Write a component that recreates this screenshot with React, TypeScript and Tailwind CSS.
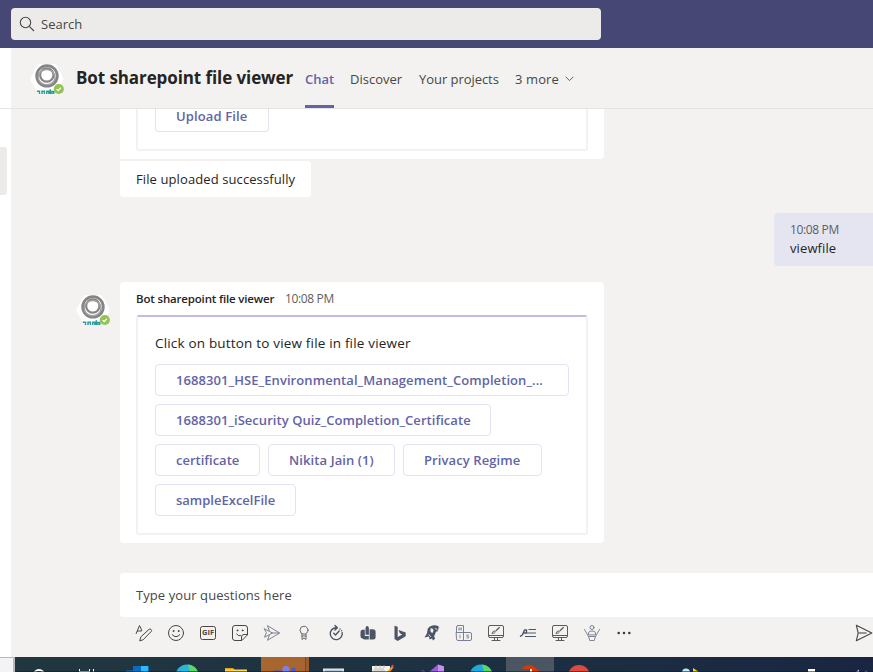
import React from "react";

const Avatar = () => (
  <svg width="36" height="34" viewBox="0 0 36 34" className="block">
    <path d="M11 1h14q2 0 3 2l6 11q1 2 0 4l-6 11q-1 2-3 2H11q-2 0-3-2L2 18q-1-2 0-4L8 3q1-2 3-2Z" fill="#fff" />
    <g fill="none" stroke="#858585">
      <circle cx="18" cy="12.900" r="10.300" strokeWidth="2.800" />
      <circle cx="17.800" cy="12" r="6.700" strokeWidth="2.200" />
      <ellipse cx="17.600" cy="14.200" rx="8.400" ry="7.600" strokeWidth="1.400" stroke="#a3a3a3" />
    </g>
    <g fill="none" stroke="#2d9a9b" strokeWidth="1.500">
      <path d="M7.800 28.300h2.700V31M13 31v-2.700h2.400V31M17.800 31v-2.700h2.100V31M21.400 26.300V31M24.800 31v-2.500h-1.800V31" />
    </g>
    <circle cx="29.800" cy="26" r="5.100" fill="#92c353" />
    <path d="m27.600 26.100 1.600 1.500 2.800-3" fill="none" stroke="#fff" strokeWidth="1.300" />
  </svg>
);

const Btn = ({ className, children }: { className: string; children: React.ReactNode }) => (
  <button className={"flex h-8 shrink-0 items-center whitespace-nowrap rounded-[4px] border border-[#e2e2f6] bg-white pl-5 text-[13px] leading-none font-semibold text-[#6264a7] " + className}>
    <span>{children}</span>
  </button>
);

const Slot = ({ children }: { children: React.ReactNode }) => (
  <button className="flex h-8 w-8 shrink-0 items-center justify-center">
    <svg width="18" height="18" viewBox="0 0 18 18" fill="none" stroke="#484644" strokeWidth="1" strokeLinecap="round" strokeLinejoin="round">
      {children}
    </svg>
  </button>
);

const Monitor = () => (
  <Slot>
    <g stroke="#5a5a5a">
      <rect x="1.500" y="1.500" width="15" height="12" rx="1.500" />
      <path d="M1.500 11.500h15M7.500 13.500v3M10.500 13.500v3M5 16.500h8" />
      <path d="m9 6.700 3.300-3.200" strokeWidth="1.200" />
      <path d="M5.300 9.300q.2-2.200 1.700-2.300t1.300 1.200-3 1.100Z" strokeWidth=".9" />
    </g>
  </Slot>
);

const Toolbar = () => (
  <div className="flex h-10 items-center pl-2">
    <Slot>
      <path d="M1.200 9.500 4.500 1.500 6.800 6.500M2.300 7h4M4.800 16.500l1-3.600 8.200-7.500q1.100-.9 2.100.1t0 2.100l-7.700 7.900Z" />
    </Slot>
    <Slot>
      <circle cx="9" cy="9" r="7.500" />
      <path d="M5.200 10.700q3.800 4.200 7.600 0" />
      <circle cx="6.400" cy="7" r=".5" fill="#484644" />
      <circle cx="11.600" cy="7" r=".5" fill="#484644" />
    </Slot>
    <button className="flex h-8 w-8 shrink-0 items-center justify-center">
      <span className="flex h-[14px] w-4 items-center justify-center rounded-[2.5px] border border-[#484644] font-['Open_Sans',sans-serif] text-[7.5px] leading-none font-bold text-[#484644]">GIF</span>
    </button>
    <Slot>
      <path d="M10.500 16.500H4A2.500 2.500 0 0 1 1.500 14V4A2.500 2.500 0 0 1 4 1.500h10A2.500 2.500 0 0 1 16.500 4v6.500Zm0 0V13a2.500 2.500 0 0 1 2.500-2.500h3.500M5.500 10q1.500 2.300 4 1.700" />
      <circle cx="6.400" cy="6.400" r=".5" fill="#484644" />
      <circle cx="11.600" cy="6.400" r=".5" fill="#484644" />
    </Slot>
    <Slot>
      <path d="M6.200 6.500 4.500 1.700 16.600 9 4.500 16.300l1.700-4.800M1.500 4.800 9.500 9l-8 4.200L3.200 9ZM9.500 9h6.500" stroke="#757b89" strokeWidth=".95" />
    </Slot>
    <Slot>
      <g stroke="#66696f">
        <circle cx="9" cy="6.200" r="4" />
        <path d="M7 10v5.500l2-1.500 2 1.500V10M7 12h4" />
      </g>
    </Slot>
    <Slot>
      <g stroke="#4c5566" strokeWidth="1.400">
        <path d="M9.500 3.700H8.500a6 6 0 1 0 6.700 5M8 1.400l2.400 2.300L8 6" />
        <path d="m6.700 9.200 1.800 1.700 3.700-3.900" />
        <path d="m13 4.900.1.100M14.600 6.700v.1" />
      </g>
    </Slot>
    <Slot>
      <g fill="#4c5566" stroke="none">
        <path d="M3.500 5.800h2.300v8.700H4q-2.500 0-2.500-2.500V8q0-2.200 2-2.200Z" />
        <path d="M6.500 4.200Q6.700 2 8.200 2t1.700 2.200v6.600H6.500ZM3.200 12h6.600v3.500H5.700q-2.500 0-2.500-3.500Z" />
        <path d="M10.600 5.200h3Q16.600 5.200 16.600 8v5q0 2.500-2.500 2.500h-3.500Z" />
      </g>
    </Slot>
    <Slot>
      <path d="m3.500 1.700 3.200 1.100v10.100l4.500-2.500-2.300-1.100-1.400-3.400 7.200 2.600v3.800L6.700 16.900l-3.200-1.800Z" fill="#4c5566" stroke="none" />
    </Slot>
    <Slot>
      <path d="M4.700 4.700Q6.500 2 9.500 1.500q4.500-1 7 1.700l-1.700.9 1.300 1-1.700.7.5 1.500-2 .5q-.6 2.700-1.800 4.200l1 2.800-2.200 1.700-.8-1.900-2.600 1-.4-3-4.600.8 2.500-4.200Z" fill="#4c5566" stroke="none" />
      <path d="M7.500 4.300q2.900-.1 3.100 2.100L9.300 9.300 7.500 7.500Z" fill="#f3f2f1" stroke="none" />
      <path d="m12.300 4.700 1.200.3M6 10.700l1.500 1.800" stroke="#f3f2f1" strokeWidth=".9" />
    </Slot>
    <Slot>
      <g stroke="#788191">
        <path d="M3 1.500h5.500v7h-7V3Q1.500 1.500 3 1.500ZM1.500 8.500h13.500q1.500 0 1.500 1.500v5q0 1.500-1.500 1.500H3q-1.500 0-1.500-1.500ZM8.500 8.500v8" />
        <path d="M4 3.700v2.600M6.200 3.700v2.600M4 5h2.200M5 11v3M13.600 11h-1.800v1.400h1.800V14h-1.800" strokeWidth=".8" />
      </g>
    </Slot>
    <Monitor />
    <Slot>
      <g stroke="#4c5566">
        <path d="m1.500 12.300 2-1.500 2-4.800h2v3H4.200l-.7 1.800" strokeWidth="1.400" />
        <path d="M10 5.500h6.500M8.500 9h8M6.500 12.500h10" strokeWidth="1.200" />
      </g>
    </Slot>
    <Monitor />
    <Slot>
      <g stroke="#788191">
        <circle cx="9" cy="3.500" r="2" />
        <path d="M5.500 10.500V9q0-2 3.500-2t3.500 2v1.500ZM1.500 5.500l4 7h7l4-7M5.500 12.500l1.300 4h4.400l1.300-4" strokeWidth=".95" />
      </g>
    </Slot>
    <Slot>
      <g fill="#3b3a39" stroke="none">
        <circle cx="3.700" cy="9" r="1.250" />
        <circle cx="9" cy="9" r="1.250" />
        <circle cx="14.300" cy="9" r="1.250" />
      </g>
    </Slot>
    <svg width="18" height="18" viewBox="0 0 18 18" className="ml-auto shrink-0" fill="none" stroke="#484644" strokeWidth="1.100" strokeLinejoin="round">
      <path d="M1.300 1.200 16.800 9 1.300 16.800 3.200 9Z" />
      <path d="M3.500 9h8" />
    </svg>
  </div>
);

const Taskbar = () => (
  <div className="flex h-[15px] shrink-0 overflow-hidden">
    <div className="w-[15px] shrink-0 border-t border-r-2 border-[#b8b8b8] bg-[#f3f2f4]" />
    <div className="flex-1 overflow-hidden bg-linear-to-r from-[#21373f] via-[#1d3142] to-[#1a2641]">
      <svg width="858" height="15" viewBox="15 0 858 15" className="block">
        <rect x="261" width="48" height="15" fill="#a7662f" />
        <rect x="305" width="1" height="15" fill="#7d4a25" />
        <rect x="306" width="3" height="15" fill="#9b5d2d" />
        <rect x="506" width="48" height="15" fill="#4b5662" />
        <circle cx="39" cy="18.500" r="5.500" fill="none" stroke="#fff" strokeWidth="1.800" />
        <path d="M79.500 12v3M79.500 14.500h10M89.500 12v3M93.500 12v3" stroke="#fff" />
        <path d="M133 9h16v6h-16Z" fill="#0a6cbd" />
        <path d="M141 9h7v6h-7Z" fill="#35b8f1" />
        <path d="M126 13.500h12V15h-12Z" fill="#0f78d4" />
        <circle cx="187" cy="19" r="11.500" fill="#2bb5d8" />
        <path d="M188 7.500q8 1 10 7.500h-8Z" fill="#5ed768" />
        <circle cx="481" cy="19" r="11.500" fill="#20a9dc" />
        <path d="M482 7.500q8 1 10 7.500h-8Z" fill="#5ed768" />
        <path d="M225 11h8l2 2h-10Z" fill="#e8a20a" />
        <path d="M225 12.500h22V15h-22Z" fill="#fbd668" />
        <circle cx="286" cy="12.500" r="3.500" fill="#7b83eb" />
        <circle cx="293.500" cy="13" r="2.500" fill="#5059c9" />
        <path d="M273 13.500h9V15h-9Z" fill="#4b53bc" />
        <path d="M323 11.500h21V15h-21Z" fill="#dce5eb" />
        <path d="M325 13.500h17V15h-17Z" fill="#8fa7b5" />
        <path d="M372 9h18v6h-18Z" fill="#f3f3ec" />
        <path d="M374 12h10M373 14h12M376 8v3M380 8v3M384 8v3" stroke="#a9a9a9" strokeWidth=".8" />
        <path d="m387 15 5-6 1.500 1.500-3.500 4.500Z" fill="#e79b24" />
        <path d="m391 9 1.500-1.500 1.500 1.500-1.200 1.500Z" fill="#e34950" />
        <path d="m429 15 9-7.500 6 2V15Z" fill="#9a5dd8" />
        <path d="M438 7.500 444 9.500V15h-6Z" fill="#c392ef" />
        <path d="m420 15 3-2 3 2Z" fill="#7749b9" />
        <path d="M522 12q3-5 10-3.500l7 5V15h-8v-3h-7Z" fill="#d83b01" />
        <path d="M530 12h2v3h-2Z" fill="#fff" />
        <circle cx="579" cy="19" r="11" fill="#d84c43" />
        <circle cx="686" cy="15.500" r="4" fill="#bde6ff" />
        <path d="m693 11 6 4h-6Z" fill="#f6d818" />
        <path d="M808 12h7v3h-7Z" fill="#fff" />
        <path d="m856 15 3-2.500V15Z" fill="#ddd" />
        <path d="m864 15 2-1.500 2 1.500Z" fill="#778394" />
        <path d="M15 14.500h858" stroke="#101727" strokeOpacity=".55" />
      </svg>
    </div>
  </div>
);

export default function App() {
  return (
    <div className="flex h-[672px] w-[873px] flex-col overflow-hidden bg-[#f3f2f1] font-['Open_Sans','Noto_Sans',sans-serif] text-[13px] leading-none text-[#252423]">
      <header className="flex h-12 shrink-0 items-center bg-[#464775] pl-[11px]">
        <div className="flex h-8 w-[590px] items-center rounded-[4px] bg-[#edebe9] pl-[8px] text-[#484644]">
          <svg width="16" height="16" viewBox="0 0 16 16" fill="none" stroke="#484644" strokeWidth="1.100">
            <circle cx="6.500" cy="6.500" r="5.200" />
            <path d="m10.300 10.300 4.700 4.700" />
          </svg>
          <span className="ml-[6px]">Search</span>
        </div>
      </header>

      <div className="flex h-[61px] shrink-0 border-b border-[#e6e4e2]">
        <div className="w-[11px] shrink-0 bg-white" />
        <div className="flex flex-1 items-center whitespace-nowrap">
          <div className="ml-[18px] w-9 pt-[4px]"><Avatar /></div>
          <h1 className="ml-[11px] w-[229px] pb-[2px] text-[17px] font-bold tracking-[-0.09px]">Bot sharepoint file viewer</h1>
          <nav className="flex h-full text-[#484644]">
            <div className="flex w-[29px] items-center border-b-[3px] border-[#6264a7] pt-[5px] font-semibold text-[#6264a7]">Chat</div>
            <div className="ml-4 flex w-[53px] items-center pt-[2px]">Discover</div>
            <div className="ml-4 flex w-[80px] items-center pt-[2px] tracking-[-0.05px]">Your projects</div>
            <div className="ml-4 flex items-center gap-[5px] pt-[2px]">
              <span className="w-[45px] tracking-[0.1px]">3 more</span>
              <svg width="9" height="6" viewBox="0 0 9 6" fill="none" stroke="#605e5c"><path d="m.7.8 3.800 3.800L8.300.8" /></svg>
            </div>
          </nav>
        </div>
      </div>

      <div className="flex h-[548px] shrink-0">
        <aside className="w-[11px] shrink-0 bg-white pt-[38px]">
          <div className="h-12 w-[7px] rounded-r-[3px] bg-[#edebe9]" />
        </aside>
        <main className="flex flex-1 flex-col pl-[109px]">
          <section className="h-[50px] w-[484px] shrink-0 rounded-br-[4px] bg-white pl-4">
            <div className="h-[42px] w-[452px] rounded-b-[3px] border-2 border-t-0 border-[#f3f2f1] pl-[17px]">
              <div className="flex h-[23px] w-[114px] flex-col justify-end rounded-b-[4px] border border-t-0 border-[#e2e2f6] pb-[8px] pl-5 font-semibold tracking-[0.13px] text-[#6264a7]">
                <span>Upload File</span>
              </div>
            </div>
          </section>
          <div className="mt-[2px] flex h-9 w-[191px] shrink-0 items-center rounded-[4px] rounded-tl-none bg-white pl-4 tracking-[0.1px]">File uploaded successfully</div>
          <div className="mt-4 ml-auto flex h-[53px] w-[99px] shrink-0 flex-col rounded-l-[4px] bg-[#e5e5f1] pt-[11px] pl-4">
            <span className="text-[12px] tracking-[-0.35px] text-[#605e5c]">10:08 PM</span>
            <span className="mt-[6px] tracking-[0.1px]">viewfile</span>
          </div>

          <div className="mt-4 -ml-[44px] flex shrink-0">
            <div className="mt-[12px] -ml-px w-[37px]"><Avatar /></div>
            <section className="ml-2 h-[261px] w-[484px] rounded-[4px] bg-white px-4 pt-[11px]">
              <div className="flex text-[12px] whitespace-nowrap">
                <span className="w-[149px] text-[11.5px] leading-[12px] font-semibold tracking-[-0.17px]">Bot sharepoint file viewer</span>
                <span className="tracking-[-0.35px] text-[#605e5c]">10:08 PM</span>
              </div>
              <div className="mt-[10px] h-[220px] w-[452px] rounded-[3px] border-2 border-[#f3f2f1] border-t-[#bdbde6] pt-[20px] pl-[17px]">
                <p className="text-[13.5px] leading-[13px] font-medium tracking-[0.18px]">Click on button to view file in file viewer</p>
                <div className="mt-[14px] flex flex-col gap-2">
                  <Btn className="w-[414px] tracking-[0.08px]">1688301_HSE_Environmental_Management_Completion_...</Btn>
                  <Btn className="w-[336px] tracking-[0.05px]">1688301_iSecurity Quiz_Completion_Certificate</Btn>
                  <div className="flex gap-2">
                    <Btn className="w-[105px]">certificate</Btn>
                    <Btn className="w-[127px] tracking-[0.1px]">Nikita Jain (1)</Btn>
                    <Btn className="w-[139px] tracking-[0.1px]">Privacy Regime</Btn>
                  </div>
                  <Btn className="w-[141px]">sampleExcelFile</Btn>
                </div>
              </div>
            </section>
          </div>

          <footer className="mt-[30px] h-[84px]">
            <div className="flex h-11 items-center rounded-l-[3px] bg-white pl-4 tracking-[0.08px] text-[#484644]">Type your questions here</div>
            <div className="-mt-1"><Toolbar /></div>
          </footer>
        </main>
      </div>
      <Taskbar />
    </div>
  );
}
